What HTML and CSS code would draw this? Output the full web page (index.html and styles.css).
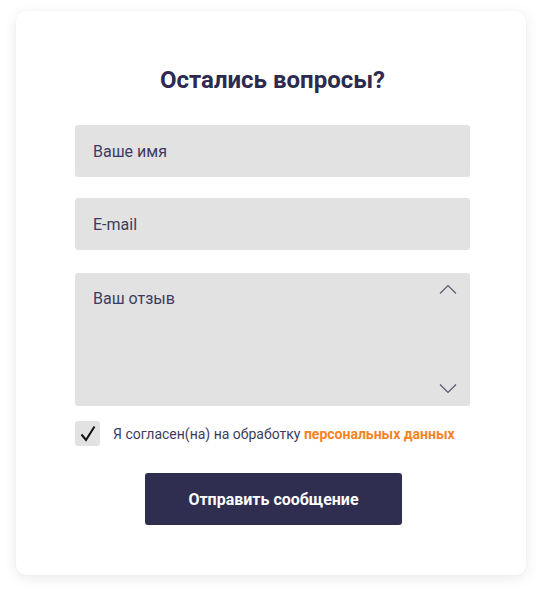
FILE: index.html
```html
<!DOCTYPE html>
<html lang="ru">
<head>
<meta charset="utf-8">
<title>Остались вопросы?</title>
<link rel="stylesheet" href="styles.css">
</head>
<body>
<div class="card">
  <h2 class="title">Остались вопросы?</h2>
  <form class="form">
    <input class="field field-name" type="text" placeholder="Ваше имя">
    <input class="field field-mail" type="text" placeholder="E-mail">
    <div class="area-wrap">
      <textarea class="field area" placeholder="Ваш отзыв"></textarea>
      <svg class="chev chev-up" width="18" height="10" viewBox="0 0 18 10"><path d="M1 9.5 L9 1.5 L17 9.5" fill="none" stroke="#55556f" stroke-width="1.1"/></svg>
      <svg class="chev chev-down" width="18" height="10" viewBox="0 0 18 10"><path d="M1 0.5 L9 8.5 L17 0.5" fill="none" stroke="#55556f" stroke-width="1.1"/></svg>
    </div>
    <label class="agree">
      <span class="box"><svg width="18" height="18" viewBox="0 0 18 18"><path d="M2.5 9.5 L7 15 L15.5 1.5" fill="none" stroke="#111" stroke-width="2"/></svg></span>
      <span class="agree-text">Я согласен(на) на обработку <b class="link">персональных данных</b></span>
    </label>
    <button class="submit" type="button">Отправить сообщение</button>
  </form>
</div>
</body>
</html>
```
FILE: styles.css
```css
html, body {
  margin: 0;
  padding: 0;
  background: #ffffff;
}
body {
  font-family: Roboto, "Liberation Sans", Arial, sans-serif;
  padding: 11px 16px 20px 16px;
}
.card {
  width: 510px;
  box-sizing: border-box;
  height: 564px;
  background: #fff;
  border-radius: 10px;
  box-shadow: 0 3px 14px rgba(0, 0, 0, 0.09), 0 0 2px rgba(0, 0, 0, 0.04);
  padding: 55px 56px 50px 59px;
  display: flex;
  flex-direction: column;
}
.title {
  margin: 0 0 31px 0;
  font-size: 24px;
  line-height: 28px;
  font-weight: 700;
  color: #2c2b4f;
  text-align: center;
}
.form {
  display: flex;
  flex-direction: column;
  margin: 0;
}
.field {
  box-sizing: border-box;
  width: 395px;
  height: 52px;
  border: none;
  border-radius: 3px;
  background: #e2e2e2;
  padding: 0 18px;
  font-family: Roboto, "Liberation Sans", Arial, sans-serif;
  font-size: 16px;
  color: #3d3c5e;
  outline: none;
}
.field::placeholder {
  color: #3d3c5e;
  opacity: 1;
}
.field-mail {
  margin-top: 21px;
}
.area-wrap {
  position: relative;
  margin-top: 23px;
  height: 133px;
}
.area {
  display: block;
  height: 133px;
  resize: none;
  padding: 16px 18px;
  line-height: 20px;
}
.chev {
  position: absolute;
  right: 13px;
}
.chev-up {
  top: 11px;
}
.chev-down {
  top: 111px;
}
.agree {
  margin-top: 15px;
  display: flex;
  align-items: center;
  gap: 13px;
  height: 25px;
}
.box {
  width: 25px;
  height: 25px;
  border-radius: 3px;
  background: #e2e2e2;
  display: flex;
  align-items: center;
  justify-content: center;
}
.agree-text {
  font-size: 14px;
  color: #3d3c5e;
  padding-top: 1px;
}
.link {
  color: #f5841f;
  font-weight: 700;
}
.submit {
  margin: 27px 0 0 70px;
  width: 257px;
  height: 52px;
  border: none;
  border-radius: 3px;
  background: #2f2e50;
  color: #fff;
  font-family: Roboto, "Liberation Sans", Arial, sans-serif;
  font-size: 16px;
  font-weight: 700;
}
```
